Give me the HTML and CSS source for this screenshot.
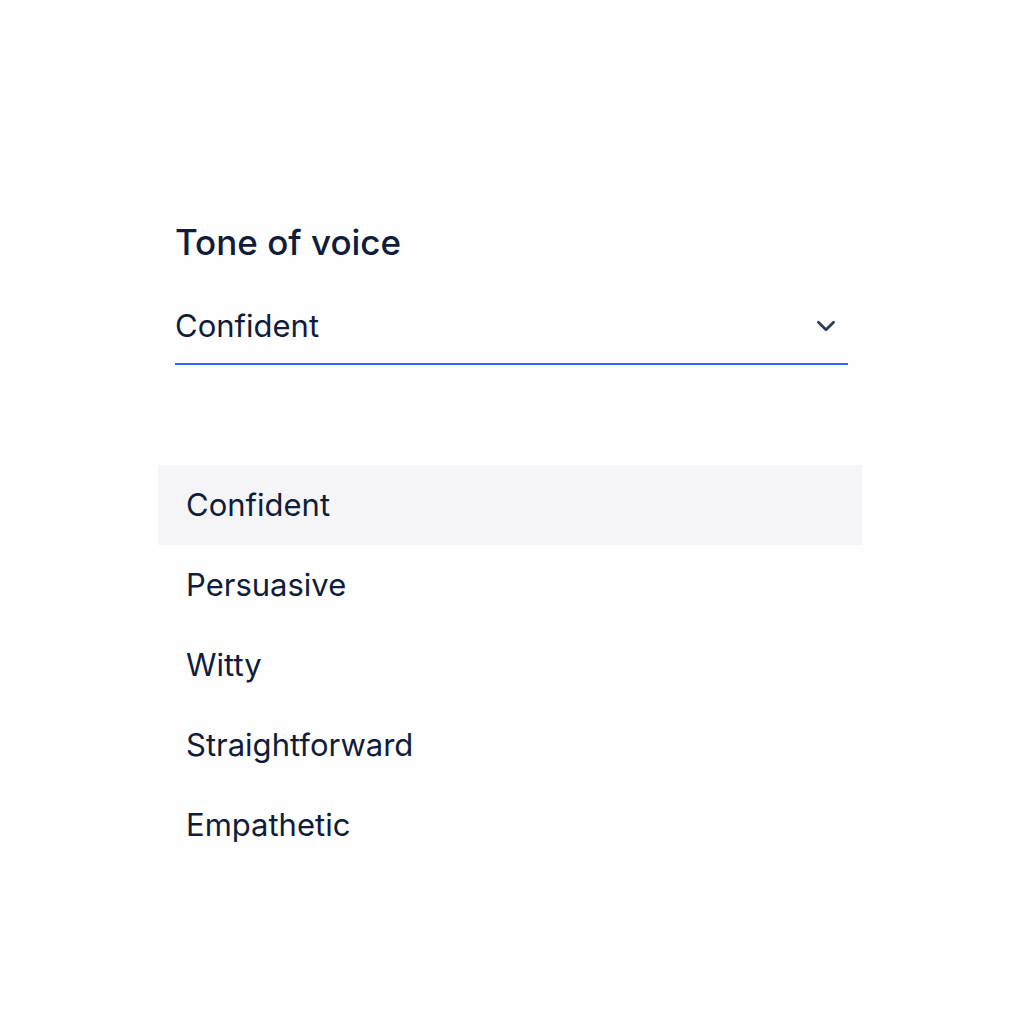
FILE: index.html
```html
<!DOCTYPE html>
<html lang="en">
<head>
  <meta charset="UTF-8">
  <title>Tone of voice</title>
  <link rel="stylesheet" href="styles.css">
</head>
<body>

  <div class="field">
    <label class="label">Tone of voice</label>
    <div class="select">
      <span class="value">Confident</span>
      <svg class="chevron" width="26" height="26" viewBox="0 0 24 24" fill="none">
        <path d="M5 8.5l7 7 7-7" stroke="#2e3b55" stroke-width="2.5" stroke-linecap="round" stroke-linejoin="round"/>
      </svg>
    </div>
  </div>

  <ul class="menu">
    <li class="option active">Confident</li>
    <li class="option">Persuasive</li>
    <li class="option">Witty</li>
    <li class="option">Straightforward</li>
    <li class="option">Empathetic</li>
  </ul>

</body>
</html>
```

FILE: styles.css
```css
body {
  margin: 0;
  font-family: 'Inter', 'Noto Sans', sans-serif;
  background-color: #fefefe;
  color: #0f1c3a;
}

.field {
  width: 673px;
  margin-left: 175px;
  padding-top: 220px;
}

.label {
  display: block;
  font-size: 35px;
  font-weight: 500;
  line-height: 44px;
}

.select {
  display: flex;
  align-items: center;
  justify-content: space-between;
  margin-top: 43px;
  padding-bottom: 18px;
  border-bottom: 2px solid #2b68f5;
}

.value {
  font-size: 31px;
  line-height: 38px;
}

.chevron {
  margin-right: 9px;
}

.menu {
  list-style: none;
  width: 704px;
  margin: 100px 0 0 158px;
  padding: 0;
}

.option {
  height: 80px;
  line-height: 80px;
  padding-left: 28px;
  font-size: 31px;
}

.option.active {
  background-color: #f5f5f7;
}
```
